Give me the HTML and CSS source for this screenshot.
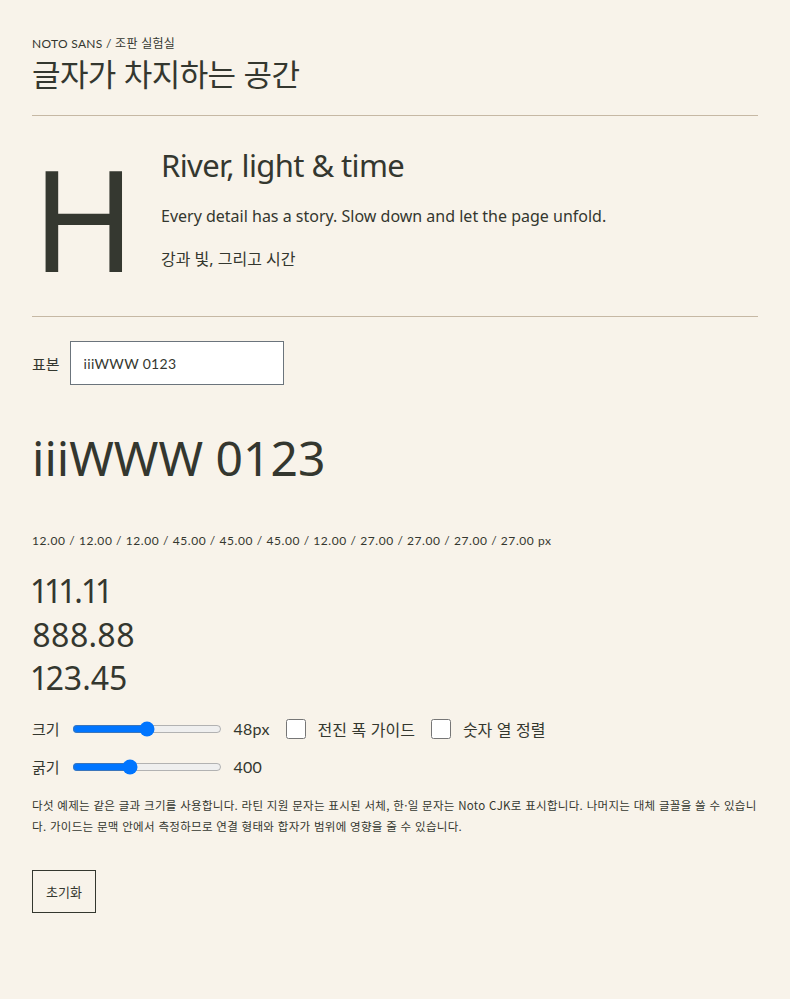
FILE: index.html
```html
<!DOCTYPE html>
<html lang="ko">
<head>
<meta charset="utf-8">
<title>글자가 차지하는 공간</title>
<link rel="stylesheet" href="styles.css">
</head>
<body>
<main class="page">
  <header class="top">
    <div class="eyebrow">NOTO SANS / 조판 실험실</div>
    <h1 class="title">글자가 차지하는 공간</h1>
  </header>
  <section class="hero">
    <div class="glyph">H</div>
    <div class="hero-text">
      <h2 class="hero-title">River, light &amp; time</h2>
      <p class="hero-para">Every detail has a story. Slow down and let the page unfold.</p>
      <p class="hero-ko">강과 빛, 그리고 시간</p>
    </div>
  </section>
  <section class="lab">
    <label class="sample-row">
      <span class="lbl">표본</span>
      <input class="sample-input" type="text" value="iiiWWW 0123">
    </label>
    <div class="sample">iiiWWW 0123</div>
    <div class="metrics">12.00 / 12.00 / 12.00 / 45.00 / 45.00 / 45.00 / 12.00 / 27.00 / 27.00 / 27.00 / 27.00 px</div>
    <div class="nums">
      <div>111.11</div>
      <div>888.88</div>
      <div>123.45</div>
    </div>
    <div class="ctrl-row">
      <span class="lbl">크기</span>
      <input class="range" type="range" min="12" max="84" value="48">
      <span class="val">48px</span>
      <label class="check"><input type="checkbox"><span>전진 폭 가이드</span></label>
      <label class="check"><input type="checkbox"><span>숫자 열 정렬</span></label>
    </div>
    <div class="ctrl-row">
      <span class="lbl">굵기</span>
      <input class="range" type="range" min="100" max="900" value="400">
      <span class="val">400</span>
    </div>
    <p class="note">다섯 예제는 같은 글과 크기를 사용합니다. 라틴 지원 문자는 표시된 서체, 한·일 문자는 Noto CJK로 표시합니다. 나머지는 대체 글꼴을 쓸 수 있습니다. 가이드는 문맥 안에서 측정하므로 연결 형태와 합자가 범위에 영향을 줄 수 있습니다.</p>
    <button class="reset" type="button">초기화</button>
  </section>
</main>
</body>
</html>
```
FILE: styles.css
```css
html, body {
  margin: 0;
  padding: 0;
  background: #f8f3ea;
}
body {
  color: #34372f;
  font-family: Lato, "Noto Sans CJK KR", sans-serif;
}
.page {
  padding: 36px 32px 40px;
}
.top {
  padding-bottom: 21px;
  border-bottom: 1px solid #c6b8a4;
}
.eyebrow {
  font-size: 12px;
  line-height: 16px;
  letter-spacing: 0.3px;
}
.title {
  margin: 0;
  font-family: "Noto Sans CJK KR", sans-serif;
  font-weight: 400;
  font-size: 31px;
  line-height: 42px;
  letter-spacing: -0.6px;
}
.hero {
  display: flex;
  align-items: flex-start;
  gap: 24px;
  padding: 26px 0 28px;
  border-bottom: 1px solid #c6b8a4;
}
.glyph {
  font-family: "Noto Sans", sans-serif;
  font-size: 140px;
  line-height: 140px;
  width: 105px;
  margin-top: 6px;
  color: #353830;
}
.hero-text {
  display: flex;
  flex-direction: column;
  padding-top: 1px;
}
.hero-title {
  margin: 0;
  font-family: "Noto Sans", sans-serif;
  font-weight: 400;
  font-size: 31px;
  line-height: 44px;
  letter-spacing: -0.6px;
}
.hero-para {
  margin: 17px 0 0;
  font-family: "Noto Sans", sans-serif;
  font-size: 16px;
  line-height: 24px;
}
.hero-ko {
  margin: 19px 0 0;
  font-family: "Noto Sans", "Noto Sans CJK KR", sans-serif;
  font-size: 16px;
  line-height: 24px;
}
.lab {
  padding-top: 24px;
}
.sample-row {
  display: flex;
  align-items: center;
  gap: 10px;
}
.lbl {
  font-family: "Noto Sans CJK KR", sans-serif;
  font-size: 15px;
}
.sample-input {
  box-sizing: border-box;
  width: 214px;
  height: 44px;
  padding: 0 13px;
  border: 1px solid #6b747c;
  border-radius: 0;
  background: #fff;
  color: #34372f;
  font-family: Lato, sans-serif;
  font-size: 14px;
  letter-spacing: 0.3px;
  outline: none;
}
.sample {
  margin-top: 40px;
  font-family: "Noto Sans", sans-serif;
  font-size: 48px;
  line-height: 66px;
}
.metrics {
  margin-top: 42px;
  font-size: 12px;
  line-height: 16px;
  letter-spacing: 0.58px;
}
.nums {
  margin-top: 20px;
  font-family: "Noto Sans", sans-serif;
  font-size: 32px;
  line-height: 43.5px;
  font-variant-numeric: proportional-nums;
  font-feature-settings: "pnum" 1;
}
.ctrl-row {
  display: flex;
  align-items: center;
  gap: 12px;
  height: 38px;
}
.nums + .ctrl-row {
  margin-top: 10px;
}
.range {
  width: 150px;
  margin: 0;
  accent-color: #0075ff;
}
.val {
  font-size: 16px;
  margin-right: 4px;
  letter-spacing: 0.2px;
}
.check {
  display: flex;
  align-items: center;
  gap: 12px;
  margin-right: 4px;
  font-family: "Noto Sans CJK KR", sans-serif;
  font-size: 16px;
}
.check input {
  width: 20px;
  height: 20px;
  margin: 0;
}
.note {
  margin: 9px 0 0;
  font-family: "Noto Sans CJK KR", sans-serif;
  font-size: 11.5px;
  line-height: 21px;
  letter-spacing: 0.3px;
  word-break: break-all;
}
.reset {
  margin-top: 33px;
  width: 64px;
  height: 43px;
  border: 1px solid #34372f;
  border-radius: 0;
  background: transparent;
  color: #34372f;
  font-family: "Noto Sans CJK KR", sans-serif;
  font-size: 13px;
  padding: 0;
}
```
